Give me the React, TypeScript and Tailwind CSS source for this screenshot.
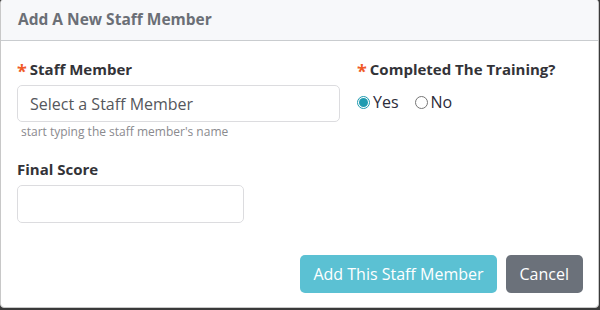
import React, { useState } from 'react';

const Radio: React.FC<{ checked: boolean; label: string; onClick: () => void }> = ({ checked, label, onClick }) => (
  <label onClick={onClick} className="flex items-center gap-[3px] cursor-pointer">
    <span
      className={
        checked
          ? 'w-[13px] h-[13px] rounded-full border border-[#1f9bb0] flex items-center justify-center bg-white'
          : 'w-[13px] h-[13px] rounded-full border border-[#767676] bg-white'
      }
    >
      {checked && <span className="w-[9px] h-[9px] rounded-full bg-[#1f9bb0]" />}
    </span>
    <span className="text-[16px] text-[#2b2b3a]">{label}</span>
  </label>
);

const App: React.FC = () => {
  const [completed, setCompleted] = useState(true);

  return (
    <div className="w-[600px] h-[310px] bg-[#3a3a3a] overflow-hidden" style={{ fontFamily: '"Open Sans", Lato, sans-serif' }}>
      <div className="w-[599px] h-[309px] bg-white border border-[#c8c8c8] rounded-[4px] mt-[-1px] flex flex-col overflow-hidden">
        {/* Header */}
        <div className="h-[41px] bg-[#f7f8fa] border-b border-[#c9cccf] flex items-center px-[17px] shrink-0">
          <h5 className="text-[15.5px] font-bold text-[#6b6f76]">Add A New Staff Member</h5>
        </div>

        {/* Body */}
        <div className="flex-1 pl-[16px] pr-[15px] pt-[17px] flex flex-col">
          <div className="flex gap-[17px]">
            <div className="w-[323px]">
              <div className="flex items-center gap-[3px] h-[22px]">
                <span className="text-[#f05a28] text-[18px] font-bold leading-none mt-[3px]">*</span>
                <span className="text-[15px] font-bold text-[#333338]">Staff Member</span>
              </div>
              <input
                type="text"
                placeholder="Select a Staff Member"
                className="mt-[5px] w-full h-[37px] border border-[#dcdcdf] rounded-[5px] px-[12px] text-[16px] text-[#333] placeholder:text-[#55575c] outline-none"
              />
              <div className="text-[12px] text-[#8a8a8e] pl-[4px] mt-[1px]">start typing the staff member's name</div>
            </div>
            <div className="flex-1">
              <div className="flex items-center gap-[3px] h-[22px]">
                <span className="text-[#f05a28] text-[18px] font-bold leading-none mt-[3px]">*</span>
                <span className="text-[15px] font-bold text-[#333338]">Completed The Training?</span>
              </div>
              <div className="flex items-center gap-[16px] mt-[10px]">
                <Radio checked={completed} label="Yes" onClick={() => setCompleted(true)} />
                <Radio checked={!completed} label="No" onClick={() => setCompleted(false)} />
              </div>
            </div>
          </div>

          <div className="mt-[17px]">
            <div className="text-[15px] font-bold text-[#333338] h-[22px] flex items-center">Final Score</div>
            <input
              type="text"
              className="mt-[5px] w-[227px] h-[38px] border border-[#dcdcdf] rounded-[5px] px-[12px] text-[16px] outline-none"
            />
          </div>

          <div className="flex justify-end gap-[9px] mt-[32px]">
            <button className="h-[38px] px-[13px] rounded-[5px] bg-[#5bc1d3] text-white text-[16px]">
              Add This Staff Member
            </button>
            <button className="h-[38px] px-[14px] rounded-[5px] bg-[#6b717a] text-white text-[16px]">
              Cancel
            </button>
          </div>
        </div>
      </div>
    </div>
  );
};

export default App;
